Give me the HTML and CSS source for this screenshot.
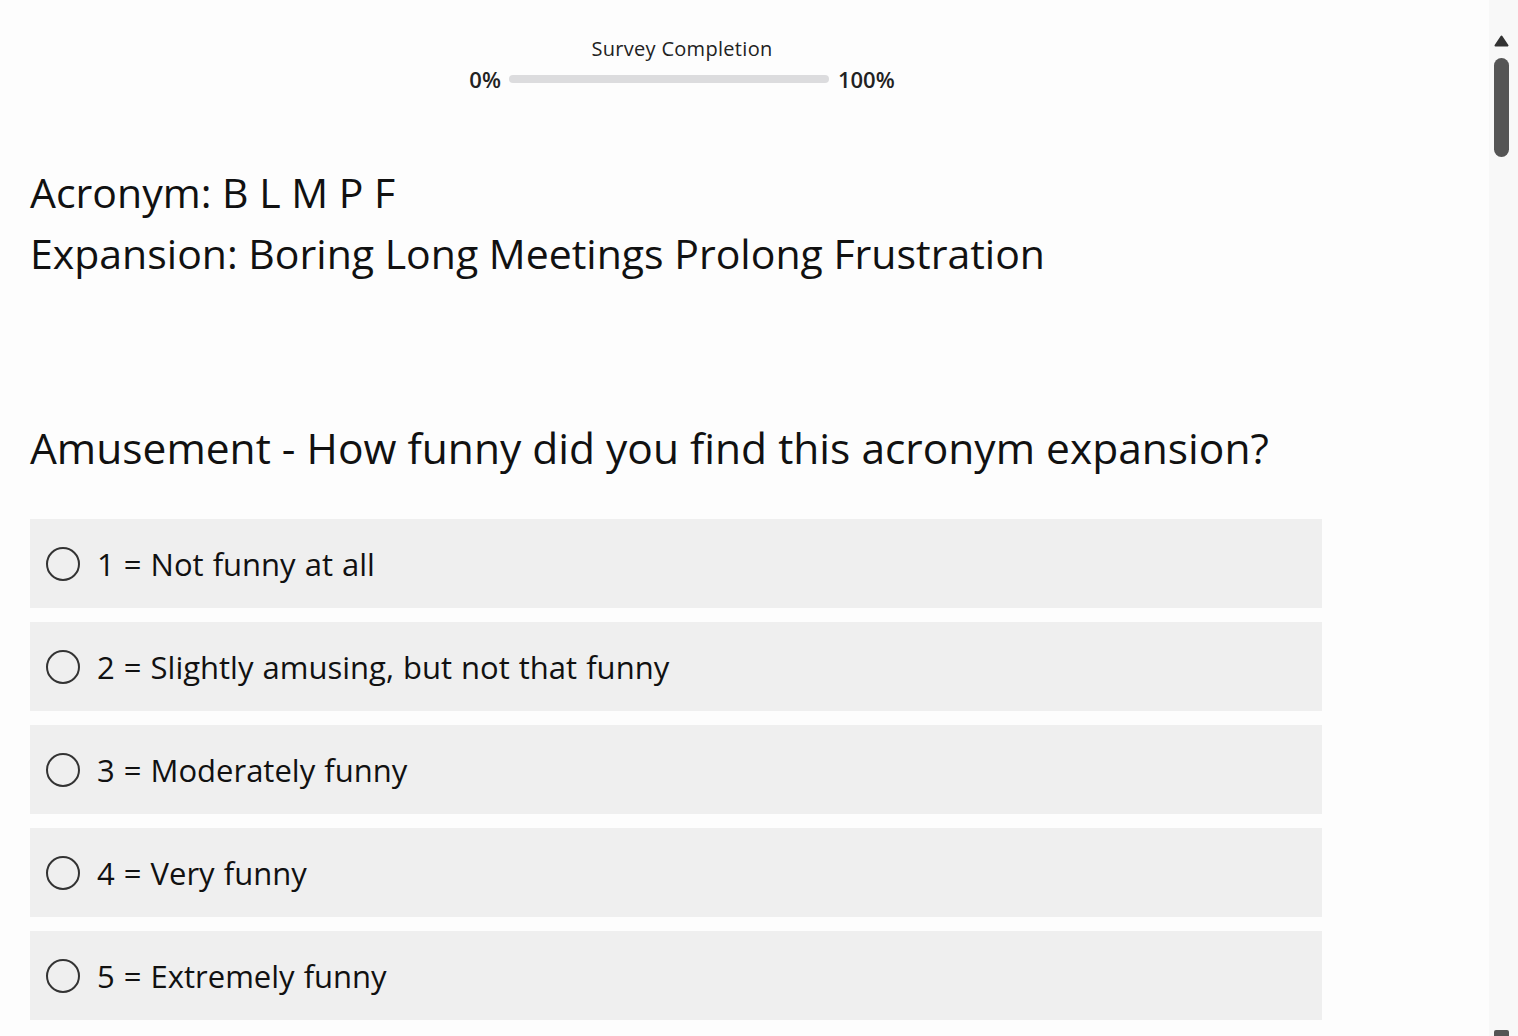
FILE: index.html
```html
<!DOCTYPE html>
<html lang="en">
  <head>
    <meta charset="UTF-8" />
    <meta name="viewport" content="width=device-width, initial-scale=1.0" />
    <title>Acronym Survey</title>
    <link rel="stylesheet" href="styles.css">
  </head>
  <body>
    <div class="survey">
      <div class="progress">
        <div class="progress-title">Survey Completion</div>
        <div class="progress-row">
          <span class="progress-end">0%</span>
          <div class="progress-track"><div class="progress-fill" style="width: 0%"></div></div>
          <span class="progress-end">100%</span>
        </div>
      </div>

      <div class="item">
        <div class="item-line">Acronym: B L M P F</div>
        <div class="item-line">Expansion: Boring Long Meetings Prolong Frustration</div>
      </div>

      <div class="question">
        <h2 class="question-title">Amusement - How funny did you find this acronym expansion?</h2>
        <div class="choices">
          <label class="choice">
            <input type="radio" name="amusement" value="1" />
            <span class="radio-mark"></span>
            <span class="choice-text">1 = Not funny at all</span>
          </label>
          <label class="choice">
            <input type="radio" name="amusement" value="2" />
            <span class="radio-mark"></span>
            <span class="choice-text">2 = Slightly amusing, but not that funny</span>
          </label>
          <label class="choice">
            <input type="radio" name="amusement" value="3" />
            <span class="radio-mark"></span>
            <span class="choice-text">3 = Moderately funny</span>
          </label>
          <label class="choice">
            <input type="radio" name="amusement" value="4" />
            <span class="radio-mark"></span>
            <span class="choice-text">4 = Very funny</span>
          </label>
          <label class="choice">
            <input type="radio" name="amusement" value="5" />
            <span class="radio-mark"></span>
            <span class="choice-text">5 = Extremely funny</span>
          </label>
        </div>
      </div>
    </div>

    <!-- page scroll indicator -->
    <div class="scroller" aria-hidden="true">
      <svg class="scroller-arrow" width="15" height="12" viewBox="0 0 15 12">
        <path d="M7.5 1.5 L13.5 10.5 L1.5 10.5 Z" fill="#333" stroke="#333" stroke-width="2" stroke-linejoin="round" />
      </svg>
      <div class="scroller-thumb"></div>
      <div class="scroller-end"></div>
    </div>
  </body>
</html>
```

FILE: styles.css
```css
body {
  margin: 0;
  padding: 0 30px;
  font-family: "Open Sans", "Noto Sans", sans-serif;
  color: #111;
  background-color: #fdfdfd;
}
.survey {
  width: 1292px;
  padding-bottom: 60px;
}
.progress {
  padding-top: 35px;
  padding-left: 12px;
  display: flex;
  flex-direction: column;
  align-items: center;
}
.progress-title {
  font-size: 20px;
  font-weight: 500;
  letter-spacing: 0.3px;
  color: #222;
  margin-bottom: 2px;
}
.progress-row {
  display: flex;
  align-items: center;
}
.progress-end {
  font-size: 22px;
  font-weight: 600;
  color: #222;
}
.progress-track {
  width: 320px;
  height: 8px;
  margin: 0 9px 0 8px;
  border-radius: 4px;
  background-color: #dcdcde;
  overflow: hidden;
}
.progress-fill {
  height: 100%;
  background-color: #5a5a5a;
}
.item {
  margin-top: 68px;
}
.item-line {
  font-size: 41px;
  line-height: 61px;
}
.question {
  margin-top: 135px;
}
.question-title {
  font-size: 42.5px;
  font-weight: 400;
  margin: 0 0 43px;
}
.choices {
  display: flex;
  flex-direction: column;
  gap: 14px;
}
.choice {
  display: flex;
  align-items: center;
  height: 89px;
  padding-left: 16px;
  background-color: #efefef;
  cursor: pointer;
}
.choice input {
  display: none;
}
.radio-mark {
  width: 30px;
  height: 30px;
  border: 2px solid #333;
  border-radius: 50%;
  margin-right: 17px;
}
.choice-text {
  font-size: 31px;
  word-spacing: 1px;
}
.scroller {
  position: fixed;
  top: 0;
  right: 0;
  bottom: 0;
  width: 25px;
  padding-right: 4px;
  background-color: #f8f8f8;
  display: flex;
  flex-direction: column;
  align-items: center;
}
.scroller-arrow {
  margin-top: 35px;
}
.scroller-thumb {
  width: 15px;
  height: 99px;
  margin-top: 11px;
  border-radius: 8px;
  background-color: #555;
}
.scroller-end {
  width: 15px;
  height: 6px;
  margin-top: auto;
  border-radius: 2px 2px 0 0;
  background-color: #555;
}
```
